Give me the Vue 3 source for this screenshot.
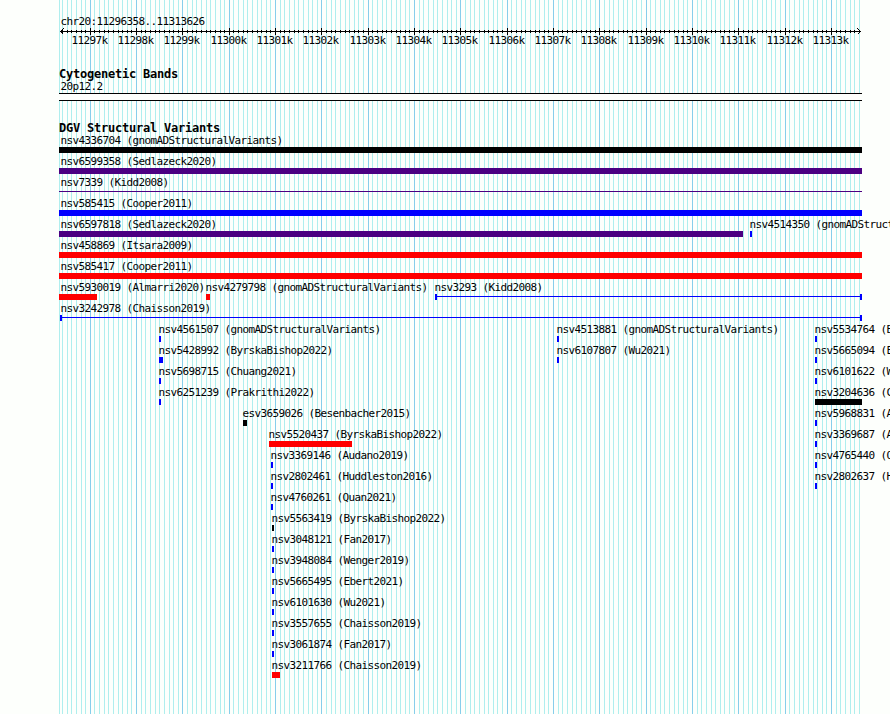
<script setup>
const start = 11296358
const end = 11313626
const scale = 800 / (end - start)

function toX(bp) {
  return Math.floor(60.55 + (bp - start) * scale)
}

const ticks = []
for (let bp = 11296400; bp <= end; bp += 100) {
  ticks.push({ bp, x: toX(bp), major: bp % 1000 === 0 })
}
const majorTicks = ticks.filter((t) => t.major)

// x is where the glyph starts, w its width, t the left edge of the label
function f(name, x, w, color, type = 'box', t = x - 1) {
  return { name, x, w, color, type, t }
}

const rows = [
  [f('nsv4336704 (gnomADStructuralVariants)', 59, 803, 'black', 'box', 60)],
  [f('nsv6599358 (Sedlazeck2020)', 59, 803, 'indigo', 'box', 60)],
  [f('nsv7339 (Kidd2008)', 59, 803, 'indigo', 'line', 60)],
  [f('nsv585415 (Cooper2011)', 59, 803, 'blue', 'box', 60)],
  [
    f('nsv6597818 (Sedlazeck2020)', 59, 684, 'indigo', 'box', 60),
    f('nsv4514350 (gnomADStructuralVariants)', 750, 2, 'blue'),
  ],
  [f('nsv458869 (Itsara2009)', 59, 803, 'red', 'box', 60)],
  [f('nsv585417 (Cooper2011)', 59, 803, 'red', 'box', 60)],
  [
    f('nsv5930019 (Almarri2020)', 59, 38, 'red', 'box', 60),
    f('nsv4279798 (gnomADStructuralVariants)', 206, 4, 'red'),
    f('nsv3293 (Kidd2008)', 435, 427, 'blue', 'span'),
  ],
  [f('nsv3242978 (Chaisson2019)', 60, 802, 'blue', 'span', 60)],
  [
    f('nsv4561507 (gnomADStructuralVariants)', 159, 2, 'blue'),
    f('nsv4513881 (gnomADStructuralVariants)', 557, 2, 'blue'),
    f('nsv5534764 (ByrskaBishop2022)', 815, 2, 'blue'),
  ],
  [
    f('nsv5428992 (ByrskaBishop2022)', 159, 4, 'blue'),
    f('nsv6107807 (Wu2021)', 557, 2, 'blue'),
    f('nsv5665094 (Ebert2021)', 815, 2, 'blue'),
  ],
  [
    f('nsv5698715 (Chuang2021)', 159, 2, 'blue'),
    f('nsv6101622 (Wu2021)', 815, 2, 'blue'),
  ],
  [
    f('nsv6251239 (Prakrithi2022)', 159, 2, 'blue'),
    f('nsv3204636 (Chaisson2019)', 815, 47, 'black'),
  ],
  [
    f('esv3659026 (Besenbacher2015)', 243, 4, 'black'),
    f('nsv5968831 (Almarri2020)', 815, 2, 'blue'),
  ],
  [
    f('nsv5520437 (ByrskaBishop2022)', 269, 83, 'red'),
    f('nsv3369687 (Audano2019)', 815, 2, 'blue'),
  ],
  [
    f('nsv3369146 (Audano2019)', 271, 2, 'blue'),
    f('nsv4765440 (Quan2021)', 815, 2, 'blue'),
  ],
  [
    f('nsv2802461 (Huddleston2016)', 271, 2, 'blue'),
    f('nsv2802637 (Huddleston2016)', 815, 2, 'blue'),
  ],
  [f('nsv4760261 (Quan2021)', 271, 2, 'blue')],
  [f('nsv5563419 (ByrskaBishop2022)', 272, 2, 'black')],
  [f('nsv3048121 (Fan2017)', 272, 2, 'blue')],
  [f('nsv3948084 (Wenger2019)', 272, 2, 'blue')],
  [f('nsv5665495 (Ebert2021)', 272, 2, 'blue')],
  [f('nsv6101630 (Wu2021)', 272, 2, 'blue')],
  [f('nsv3557655 (Chaisson2019)', 272, 2, 'blue')],
  [f('nsv3061874 (Fan2017)', 272, 2, 'blue')],
  [f('nsv3211766 (Chaisson2019)', 272, 8, 'red')],
]
</script>

<template>
  <div class="browser">
    <svg class="grid" width="890" height="714" shape-rendering="crispEdges">
      <rect class="minor" x="59" y="0" width="1" height="714" />
      <rect
        v-for="t in ticks"
        :key="t.bp"
        :class="t.major ? 'major' : 'minor'"
        :x="t.x"
        y="0"
        width="1"
        height="714"
      />
    </svg>

    <section class="overview">
      <div class="region">chr20:11296358..11313626</div>
      <svg class="ruler" width="890" height="8" shape-rendering="crispEdges">
        <rect x="60" y="3" width="801" height="1" />
        <rect
          v-for="t in ticks"
          :key="t.bp"
          :x="t.x"
          :y="t.major ? 0 : 2"
          width="1"
          :height="t.major ? 7 : 3"
        />
        <path d="M63.5 .5 L60.5 3.5 L63.5 6.5 M857.5 .5 L860.5 3.5 L857.5 6.5" />
      </svg>
      <div class="scale">
        <span v-for="t in majorTicks" :key="t.bp" :style="{ left: t.x - 19 + 'px' }">{{ t.bp / 1000 }}k</span>
      </div>
    </section>

    <section class="cyto">
      <h2>Cytogenetic Bands</h2>
      <div class="name">20p12.2</div>
      <div class="band"></div>
    </section>

    <section class="variants">
      <h2>DGV Structural Variants</h2>
      <div v-for="(row, i) in rows" :key="i" class="row">
        <template v-for="v in row" :key="v.name">
          <span class="label" :style="{ left: v.t + 'px' }">{{ v.name }}</span>
          <i :class="['glyph', v.type, v.color]" :style="{ left: v.x + 'px', width: v.w + 'px' }"></i>
        </template>
      </div>
    </section>
  </div>
</template>

<style>
body {
  margin: 0;
  background: #fdfffc;
}
</style>

<style scoped>
.browser {
  position: relative;
  width: 890px;
  height: 714px;
  overflow: hidden;
  font: 11px/12px "DejaVu Sans Mono", monospace;
  letter-spacing: -0.622px;
  color: #000;
  white-space: pre;
}

.grid {
  position: absolute;
  top: 0;
  left: 0;
}

.minor {
  fill: #afeeee;
}

.major {
  fill: #87ceeb;
}

section {
  position: relative;
}

.overview {
  height: 68px;
  padding-top: 16px;
  box-sizing: border-box;
}

.region,
.name {
  height: 12px;
  padding-left: 60.5px;
}

.ruler {
  display: block;
}

.ruler path {
  fill: none;
  stroke: #000;
}

.scale {
  position: relative;
  height: 12px;
  margin-top: -1px;
}

.scale span {
  position: absolute;
  top: 0;
  padding-left: 0.5px;
}

h2 {
  margin: 0;
  height: 13px;
  padding-left: 59px;
  font-size: 12px;
  line-height: 12px;
  font-weight: bold;
  letter-spacing: -0.224px;
}

.cyto {
  height: 54px;
}

.band {
  width: 803px;
  height: 6px;
  margin-left: 59px;
  border-top: 1px solid #000;
  border-bottom: 1px solid #000;
  background: #fdfffc;
}

.row {
  position: relative;
  height: 21px;
}

.label {
  position: absolute;
  top: 0;
  padding-left: 0.5px;
}

.glyph {
  position: absolute;
  top: 12px;
  height: 6px;
  box-sizing: border-box;
  background: currentColor;
}

.glyph.line {
  top: 14px;
  height: 1px;
}

.glyph.span {
  border: solid currentColor;
  border-width: 0 2px;
  background: linear-gradient(currentColor, currentColor) 0 2px / 100% 1px no-repeat;
}

.black {
  color: #000;
}

.indigo {
  color: #4b0082;
}

.blue {
  color: #00f;
}

.red {
  color: #f00;
}
</style>
